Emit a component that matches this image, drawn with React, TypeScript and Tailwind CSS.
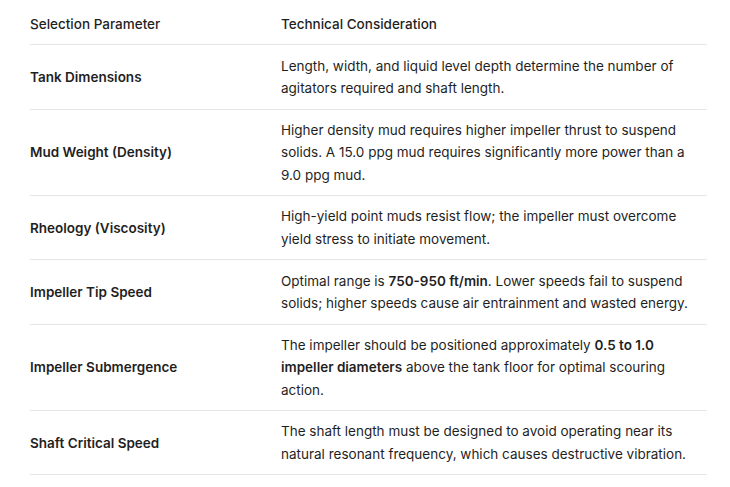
import React from 'react'

type Row = {
  param: string
  detail: React.ReactNode
}

const rows: Row[] = [
  {
    param: 'Tank Dimensions',
    detail: 'Length, width, and liquid level depth determine the number of agitators required and shaft length.',
  },
  {
    param: 'Mud Weight (Density)',
    detail:
      'Higher density mud requires higher impeller thrust to suspend solids. A 15.0 ppg mud requires significantly more power than a 9.0 ppg mud.',
  },
  {
    param: 'Rheology (Viscosity)',
    detail: 'High-yield point muds resist flow; the impeller must overcome yield stress to initiate movement.',
  },
  {
    param: 'Impeller Tip Speed',
    detail: (
      <>
        Optimal range is <strong className="font-semibold">750-950 ft/min</strong>. Lower speeds fail to suspend
        solids; higher speeds cause air entrainment and wasted energy.
      </>
    ),
  },
  {
    param: 'Impeller Submergence',
    detail: (
      <>
        The impeller should be positioned approximately{' '}
        <strong className="font-semibold">0.5 to 1.0 impeller diameters</strong> above the tank floor for optimal
        scouring action.
      </>
    ),
  },
  {
    param: 'Shaft Critical Speed',
    detail:
      'The shaft length must be designed to avoid operating near its natural resonant frequency, which causes destructive vibration.',
  },
]

export default function App() {
  return (
    <div className="min-h-screen bg-white pl-[30px] pr-[23px] font-['Inter',sans-serif] text-[13.5px] leading-[22.4px] text-[#1f1f1f]">
      <table className="w-full border-collapse text-left">
        <thead>
          <tr className="border-b border-[#e6e6e6]">
            <th className="w-[251px] pt-[13px] pb-[9px] pr-3 font-medium">Selection Parameter</th>
            <th className="pt-[13px] pb-[9px] pr-3 font-medium">Technical Consideration</th>
          </tr>
        </thead>
        <tbody>
          {rows.map((row) => (
            <tr key={row.param} className="border-b border-[#e6e6e6]">
              <td className="py-[9.2px] pr-3 align-middle font-semibold">{row.param}</td>
              <td className="py-[9.2px] pr-[14px] align-middle">{row.detail}</td>
            </tr>
          ))}
        </tbody>
      </table>
    </div>
  )
}
